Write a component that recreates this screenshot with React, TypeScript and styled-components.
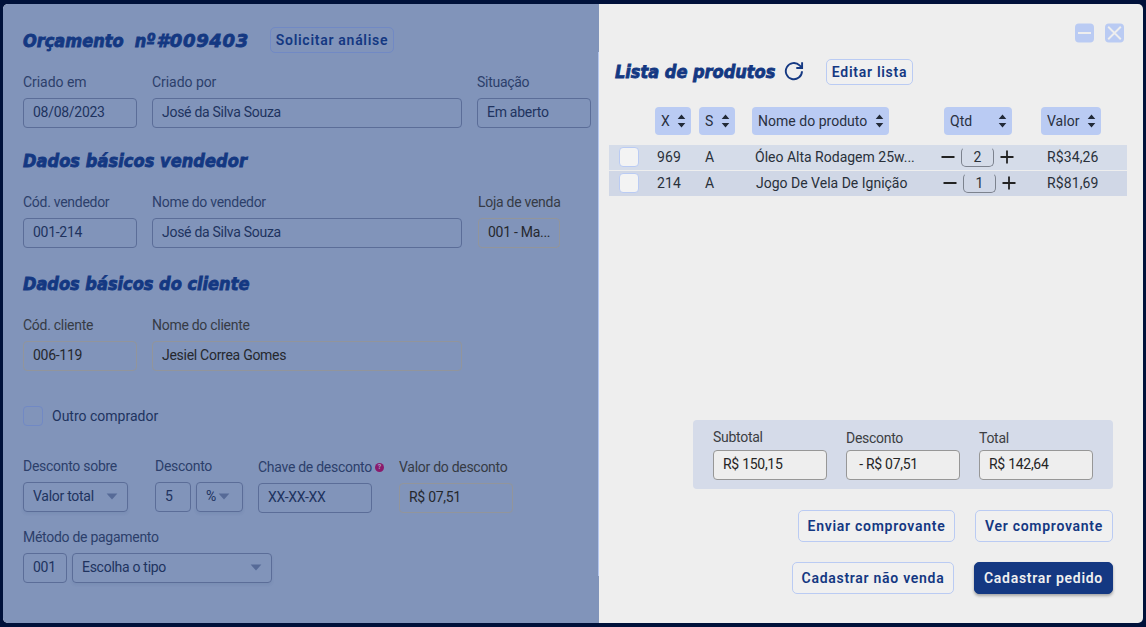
import React from "react";
import styled, { createGlobalStyle, css } from "styled-components";

const GlobalStyle = createGlobalStyle`
  * { box-sizing: border-box; }
  body { margin: 0; background: #00113a; font-family: Roboto, sans-serif; overflow: hidden; }
  button, input { font-family: inherit; }
`;

const Window = styled.main`
  display: flex;
  width: 1140px;
  height: 619px;
  margin: 4px 3px;
  border-radius: 5px;
  overflow: hidden;
  background: #eeeeee;
`;

const FormPane = styled.section`
  display: flex;
  width: 596px;
  background: #8194ba;
`;

const Form = styled.div`
  flex: 1;
  padding: 23px 0 0 20px;
`;

const Divider = styled.div`
  width: 1px;
  margin: 48px 0 47px;
  background: #b4c6ee;
`;

const Heading = styled.h2<{ $top?: number; $spacing?: number }>`
  margin: ${(p) => p.$top ?? 0}px 0 0;
  height: 20px;
  line-height: 20px;
  font-family: "DejaVu Sans Condensed", "DejaVu Sans", sans-serif;
  font-stretch: condensed;
  font-size: 18px;
  font-weight: 700;
  font-style: italic;
  letter-spacing: ${(p) => p.$spacing ?? 0}px;
  white-space: pre;
  color: #143882;
  -webkit-text-stroke: 0.8px #143882;
`;

const OrderNumber = styled.span`
  margin-left: 1px;
  font-family: "DejaVu Sans", sans-serif;
  font-stretch: normal;
  letter-spacing: 0.7px;
`;

const Header = styled.header`
  display: flex;
  align-items: center;
  height: 26px;
`;

const Button = styled.button<{ $w: number; $h?: number; $muted?: boolean; $solid?: boolean }>`
  display: flex;
  align-items: center;
  justify-content: center;
  flex: none;
  width: ${(p) => p.$w}px;
  height: ${(p) => p.$h ?? 32}px;
  padding: 0;
  border: 1px solid ${(p) => (p.$muted ? "#7189c4" : "#bacbf3")};
  border-radius: 5px;
  background: ${(p) => (p.$muted ? "transparent" : "#f0f0f0")};
  color: #143882;
  font-size: 14px;
  font-weight: 600;
  letter-spacing: 0.72px;
  white-space: nowrap;
  ${(p) =>
    p.$solid &&
    css`
      border-color: #143882;
      background: #143882;
      color: #f0f0f0;
      box-shadow: 0 2px 3px rgba(0, 0, 0, 0.3);
    `}
`;

const Row = styled.div<{ $top: number }>`
  display: flex;
  align-items: flex-start;
  margin-top: ${(p) => p.$top}px;
`;

type Tone = "blue" | "fixed" | "plain";
const tones = {
  blue: { label: "#2c3f6b", text: "#20335f", border: "#5b6d98", bg: "transparent" },
  fixed: { label: "#363b45", text: "#25282e", border: "#92959b", bg: "transparent" },
  plain: { label: "#3c3e43", text: "#252525", border: "#979797", bg: "#eeeeee" },
};

const FieldBox = styled.div<{ $left: number; $top: number; $w?: number }>`
  display: flex;
  flex-direction: column;
  flex: none;
  ${(p) => p.$w && `width: ${p.$w}px;`}
  margin: ${(p) => p.$top}px 0 0 ${(p) => p.$left}px;
`;

const Label = styled.label<{ $tone: Tone; $gap: number; $spacing: number }>`
  display: flex;
  align-items: center;
  height: 16px;
  margin-bottom: ${(p) => p.$gap}px;
  font-size: 14px;
  letter-spacing: ${(p) => p.$spacing}px;
  white-space: nowrap;
  color: ${(p) => tones[p.$tone].label};
`;

const Controls = styled.div`
  display: flex;
  gap: 5px;
`;

const Control = styled.div<{ $w: number; $tone?: Tone; $end?: number; $raised?: boolean }>`
  display: flex;
  align-items: center;
  justify-content: space-between;
  width: ${(p) => p.$w}px;
  height: 30px;
  padding: 0 ${(p) => p.$end ?? 9}px 2px 9px;
  border: 1px solid ${(p) => tones[p.$tone ?? "blue"].border};
  border-radius: 4px;
  background: ${(p) => tones[p.$tone ?? "blue"].bg};
  color: ${(p) => tones[p.$tone ?? "blue"].text};
  font-size: 14px;
  letter-spacing: -0.28px;
  white-space: pre;
  box-shadow: ${(p) => (p.$raised ? "0 2px 3px rgba(40, 60, 110, 0.08)" : "none")};
`;

const CheckRow = styled.div`
  display: flex;
  align-items: center;
  gap: 9px;
  height: 20px;
  margin-top: 35px;
  color: #20335f;
  font-size: 14px;
`;

const Check = styled.span<{ $muted?: boolean }>`
  width: 20px;
  height: 20px;
  border: 1px solid ${(p) => (p.$muted ? "#7189c4" : "#bacbf3")};
  border-radius: 4px;
  background: ${(p) => (p.$muted ? "transparent" : "#f3f3f3")};
`;

const Help = styled.span`
  display: flex;
  flex: none;
  align-items: center;
  justify-content: center;
  width: 9px;
  height: 9px;
  margin-left: 3px;
  border-radius: 50%;
  background: #8a1a6c;
  color: #a9a0c4;
  font-size: 7px;
  font-weight: 700;
  letter-spacing: 0;
`;

const Side = styled.section`
  display: flex;
  flex-direction: column;
  width: 544px;
  padding: 19px 16px 0 10px;
`;

const WindowActions = styled.div`
  display: flex;
  justify-content: flex-end;
  gap: 11px;
  height: 20px;
  padding-right: 3px;
`;

const ListHeader = styled.header`
  display: flex;
  align-items: center;
  height: 26px;
  margin: 16px 0 22px;
  padding-left: 6px;
`;

const RefreshSlot = styled.span`
  display: flex;
  width: 20px;
  height: 20px;
  margin: 0 22px 2px 0;
`;

const TitleSlot = styled.div<{ $w: number; $drop?: number }>`
  width: ${(p) => p.$w}px;
  padding-top: ${(p) => p.$drop ?? 0}px;
`;

const TableHead = styled.div`
  display: grid;
  grid-template-columns: 44px 53px 192px 97px 60px;
  height: 28px;
  margin-bottom: 10px;
  padding-left: 46px;
`;

const SortChip = styled.button<{ $w: number }>`
  display: flex;
  align-items: center;
  justify-content: space-between;
  width: ${(p) => p.$w}px;
  height: 28px;
  padding: 0 5px 0 6px;
  border: 0;
  border-radius: 4px;
  background: #bacbf3;
  color: #29303f;
  font-size: 14px;
  letter-spacing: 0.02px;
  white-space: nowrap;
`;

const ProductRow = styled.div<{ $alt?: boolean }>`
  display: grid;
  grid-template-columns: 48px 48px 50px 186px 106px 1fr;
  align-items: center;
  height: 25px;
  margin-bottom: 1px;
  padding-bottom: 2px;
  background: ${(p) => (p.$alt ? "#d0d7e6" : "#d5dce9")};
  color: #29303a;
  font-size: 14px;
  letter-spacing: 0.1px;
  white-space: nowrap;
`;

const CheckSlot = styled.div`
  display: flex;
  padding-left: 10px;
`;

const Name = styled.span<{ $indent: number }>`
  padding-left: ${(p) => p.$indent}px;
  letter-spacing: 0;
`;

const Quantity = styled.div<{ $indent: number }>`
  display: flex;
  align-items: center;
  gap: 6px;
  padding-left: ${(p) => p.$indent}px;
`;

const Amount = styled.span`
  display: flex;
  align-items: center;
  justify-content: center;
  width: 33px;
  height: 20px;
  border: 1px solid #7c828e;
  border-top-color: transparent;
  border-radius: 5px;
`;

const Summary = styled.div`
  display: flex;
  gap: 19px;
  width: 420px;
  height: 69px;
  margin: 223px 14px 0 auto;
  padding-left: 20px;
  border-radius: 4px;
  background: #d5dbe9;
`;

const Actions = styled.div<{ $top: number }>`
  display: flex;
  justify-content: flex-end;
  gap: 20px;
  margin: ${(p) => p.$top}px 14px 0 0;
`;

const Caret = () => (
  <svg width="12" height="7" viewBox="0 0 12 7">
    <path d="M0.6 0.5h10.8L6 6.5z" fill="#566a97" />
  </svg>
);

const Sorter = () => (
  <svg width="9" height="14" viewBox="0 0 9 14">
    <path d="M4.5 0.6 8.3 5H0.7zM4.5 13.4 8.3 9H0.7z" fill="#222a38" />
  </svg>
);

const Sign = ({ plus }: { plus?: boolean }) => (
  <svg width="14" height="14" viewBox="0 0 14 14" stroke="#222" strokeWidth="1.8">
    <path d={plus ? "M0.5 7h13M7 0.5v13" : "M0.5 7h13"} />
  </svg>
);

const WindowIcon = ({ d }: { d: string }) => (
  <svg width="19" height="20" viewBox="0 0 19 20" fill="none">
    <rect y="0.4" width="19" height="19.2" rx="4" fill="#bacbf3" />
    <path d={d} stroke="#eeeeee" strokeWidth="1.9" />
  </svg>
);

const Refresh = () => (
  <svg width="20" height="20" viewBox="0 0 20 20" fill="none" stroke="#143882" strokeWidth="1.9">
    <path d="M18 10.2A8.1 8.1 0 1 1 15.6 4.4L17.6 6.4M18.1 1.2V7H12.3" />
  </svg>
);

interface FieldProps {
  label: React.ReactNode;
  value?: string;
  w?: number;
  left?: number;
  top?: number;
  gap?: number;
  spacing?: number;
  tone?: Tone;
  children?: React.ReactNode;
}

const Field = ({ label, value, w = 114, left = 0, top = 0, gap = 8, spacing = -0.28, tone = "blue", children }: FieldProps) => (
  <FieldBox $left={left} $top={top} $w={children ? undefined : w}>
    <Label $tone={tone} $gap={gap} $spacing={spacing}>{label}</Label>
    {children ?? <Control $w={w} $tone={tone}>{value}</Control>}
  </FieldBox>
);

const products = [
  { code: "969", status: "A", name: "Óleo Alta Rodagem 25w...", qty: 2, price: "R$34,26", shift: 0 },
  { code: "214", status: "A", name: "Jogo De Vela De Ignição", qty: 1, price: "R$81,69", shift: 1 },
];

const columns: [string, number][] = [["X", 36], ["S", 36], ["Nome do produto", 137], ["Qtd", 68], ["Valor", 60]];

export default function App() {
  return (
    <>
      <GlobalStyle />
      <Window>
        <FormPane>
          <Form>
            <Header>
              <TitleSlot $w={247} $drop={2}>
                <Heading>Orçamento  nº<OrderNumber>#009403</OrderNumber></Heading>
              </TitleSlot>
              <Button $w={124} $h={26} $muted>Solicitar análise</Button>
            </Header>
            <Row $top={21}>
              <Field label="Criado em" value="08/08/2023" spacing={-0.05} />
              <Field label="Criado por" value="José da Silva Souza" w={310} left={15} spacing={-0.05} />
              <Field label="Situação" value="Em aberto" left={15} />
            </Row>
            <Heading $top={23} $spacing={0.07}>Dados básicos vendedor</Heading>
            <Row $top={23}>
              <Field label="Cód. vendedor" value="001-214" />
              <Field label="Nome do vendedor" value="José da Silva Souza" w={310} left={15} />
              <Field label="Loja de venda" value="001 - Ma..." w={82} left={16} tone="fixed" />
            </Row>
            <Heading $top={26}>Dados básicos do cliente</Heading>
            <Row $top={23}>
              <Field label="Cód. cliente" value="006-119" tone="fixed" />
              <Field label="Nome do cliente" value="Jesiel Correa Gomes" w={310} left={15} tone="fixed" />
            </Row>
            <CheckRow><Check $muted />Outro comprador</CheckRow>
            <Row $top={32}>
              <Field label="Desconto sobre">
                <Control $w={105} $raised>Valor total<Caret /></Control>
              </Field>
              <Field label="Desconto" left={27}>
                <Controls>
                  <Control $w={36}>5</Control>
                  <Control $w={47} $end={12} $raised>%<Caret /></Control>
                </Controls>
              </Field>
              <Field label={<>Chave de desconto<Help>?</Help></>} value="XX-XX-XX" left={15} top={1} />
              <Field label="Valor do desconto" value="R$ 07,51" left={27} top={1} tone="fixed" />
            </Row>
            <Row $top={16}>
              <Field label="Método de pagamento">
                <Controls>
                  <Control $w={44}>001</Control>
                  <Control $w={200} $raised>Escolha o tipo<Caret /></Control>
                </Controls>
              </Field>
            </Row>
          </Form>
          <Divider />
        </FormPane>
        <Side>
          <WindowActions>
            <WindowIcon d="M3 10h13" />
            <WindowIcon d="M3.2 3.8 15.8 16.2M15.8 3.8 3.2 16.2" />
          </WindowActions>
          <ListHeader>
            <TitleSlot $w={169}><Heading>Lista de produtos</Heading></TitleSlot>
            <RefreshSlot><Refresh /></RefreshSlot>
            <Button $w={87} $h={26}>Editar lista</Button>
          </ListHeader>
          <TableHead>
            {columns.map(([name, w]) => (
              <SortChip key={name} $w={w}>{name}<Sorter /></SortChip>
            ))}
          </TableHead>
          {products.map((p) => (
            <ProductRow key={p.code} $alt={p.shift > 0}>
              <CheckSlot><Check /></CheckSlot>
              <span>{p.code}</span>
              <span>{p.status}</span>
              <Name $indent={p.shift}>{p.name}</Name>
              <Quantity $indent={p.shift * 2}>
                <Sign /><Amount>{p.qty}</Amount><Sign plus />
              </Quantity>
              <span>{p.price}</span>
            </ProductRow>
          ))}
          <Summary>
            <Field label="Subtotal" value="R$ 150,15" tone="plain" top={9} gap={5} />
            <Field label="Desconto" value=" - R$ 07,51" tone="plain" top={10} gap={4} />
            <Field label="Total" value="R$ 142,64" tone="plain" top={10} gap={4} />
          </Summary>
          <Actions $top={21}>
            <Button $w={157}>Enviar comprovante</Button>
            <Button $w={138}>Ver comprovante</Button>
          </Actions>
          <Actions $top={20}>
            <Button $w={162}>Cadastrar não venda</Button>
            <Button $w={139} $solid>Cadastrar pedido</Button>
          </Actions>
        </Side>
      </Window>
    </>
  );
}
